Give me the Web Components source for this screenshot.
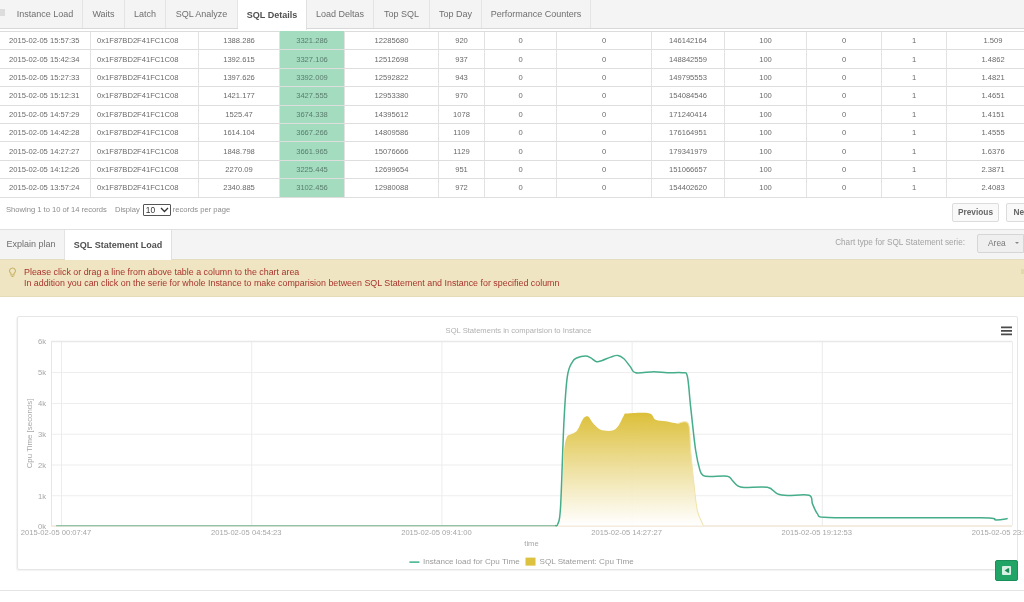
<!DOCTYPE html>
<html>
<head>
<meta charset="utf-8">
<title>SQL Details</title>
<style>
html, body { margin: 0; padding: 0; background: #fff; overflow: hidden; height: 602px; }
body { font-family: "Liberation Sans", Arial, sans-serif; color: #666; width: 1045px; filter: blur(.3px); }
</style>
</head>
<body>

<top-tabs>
  <tab-item style="--w:75px">Instance Load</tab-item>
  <tab-item style="--w:42px">Waits</tab-item>
  <tab-item style="--w:41px">Latch</tab-item>
  <tab-item style="--w:72px">SQL Analyze</tab-item>
  <tab-item style="--w:69px" active>SQL Details</tab-item>
  <tab-item style="--w:67px">Load Deltas</tab-item>
  <tab-item style="--w:56px">Top SQL</tab-item>
  <tab-item style="--w:52px">Top Day</tab-item>
  <tab-item style="--w:109px">Performance Counters</tab-item>
</top-tabs>

<stats-table></stats-table>
<table-footer></table-footer>

<sub-tabs>
  <tab-item style="--w:65px;--h:29px;padding-right:2px">Explain plan</tab-item>
  <tab-item style="--w:107px;--h:29px" active>SQL Statement Load</tab-item>
  <type-picker slot="right"></type-picker>
</sub-tabs>

<hint-box>
  <div>Please click or drag a line from above table a column to the chart area</div>
  <div>In addition you can click on the serie for whole Instance to make comparision between SQL Statement and Instance for specified column</div>
</hint-box>

<load-chart></load-chart>

<script>
class TabItem extends HTMLElement {
  constructor() {
    super();
    this.attachShadow({ mode: "open" }).innerHTML = `
    <style>
    :host {
      display: flex;
      align-items: center;
      justify-content: center;
      box-sizing: border-box;
      width: var(--w);
      height: var(--h, 28px);
      font-size: 9px;
      color: #6f6f6f;
      border-right: 1px solid #e4e4e4;
      white-space: nowrap;
    }
    :host([active]) {
      background: #fff;
      color: #505050;
      font-weight: 700;
      height: calc(var(--h, 28px) + 2px);
      margin-bottom: -1px;
      border-right: 1px solid #e0e0e0;
    }
    </style>
    <slot></slot>`;
  }
}

class TopTabs extends HTMLElement {
  constructor() {
    super();
    this.attachShadow({ mode: "open" }).innerHTML = `
    <style>
    :host {
      display: flex;
      height: 28px;
      background: #f4f4f4;
      border-bottom: 1px solid #d8d8d8;
      padding-left: 8px;
      position: relative;
    }
    .grip {
      position: absolute;
      left: 0;
      top: 9px;
      width: 5px;
      height: 7px;
      background: #dcdcdc;
    }
    </style>
    <div class="grip"></div>
    <slot></slot>`;
  }
}

class StatsTable extends HTMLElement {
  constructor() {
    super();
    this.shadow = this.attachShadow({ mode: "open" });
  }

  connectedCallback() {
    const sqlId = "0x1F87BD2F41FC1C08";
    const rows = [
      ["15:57:35", "1388.286", "3321.286", "12285680", "920", "146142164", "1.509"],
      ["15:42:34", "1392.615", "3327.106", "12512698", "937", "148842559", "1.4862"],
      ["15:27:33", "1397.626", "3392.009", "12592822", "943", "149795553", "1.4821"],
      ["15:12:31", "1421.177", "3427.555", "12953380", "970", "154084546", "1.4651"],
      ["14:57:29", "1525.47", "3674.338", "14395612", "1078", "171240414", "1.4151"],
      ["14:42:28", "1614.104", "3667.266", "14809586", "1109", "176164951", "1.4555"],
      ["14:27:27", "1848.798", "3661.965", "15076666", "1129", "179341979", "1.6376"],
      ["14:12:26", "2270.09", "3225.445", "12699654", "951", "151066657", "2.3871"],
      ["13:57:24", "2340.885", "3102.456", "12980088", "972", "154402620", "2.4083"]
    ];
    const cells = rows.map(r => [
      `<div class="c left first">2015-02-05 ${r[0]}</div>`,
      `<div class="c left">${sqlId}</div>`,
      `<div class="c">${r[1]}</div>`,
      `<div class="c hot">${r[2]}</div>`,
      `<div class="c">${r[3]}</div>`,
      `<div class="c">${r[4]}</div>`,
      `<div class="c">0</div>`,
      `<div class="c">0</div>`,
      `<div class="c">${r[5]}</div>`,
      `<div class="c">100</div>`,
      `<div class="c">0</div>`,
      `<div class="c">1</div>`,
      `<div class="c">${r[6]}</div>`
    ].join("")).join("");

    this.shadow.innerHTML = `
    <style>
    :host {
      display: block;
      margin-top: 2px;
      border-top: 1px solid #dcdcdc;
      width: 1040px;
    }
    .grid {
      display: grid;
      grid-template-columns: 91px 108px 81px 65px 94px 46px 72px 95px 73px 82px 75px 65px 93px;
      grid-auto-rows: 18.4px;
      font-size: 7.6px;
      color: #6a6a6a;
    }
    .c {
      display: flex;
      align-items: center;
      justify-content: center;
      box-sizing: border-box;
      border-right: 1px solid #e2e2e2;
      border-bottom: 1px solid #dedede;
      white-space: nowrap;
    }
    .left { justify-content: flex-start; padding-left: 6px; }
    .first { padding-left: 9px; }
    .hot { background: #a4dcc0; color: #5a7d6c; margin-top: -1px; }
    .grid > .hot:nth-child(n+14) { margin-top: 0; }
    </style>
    <div class="grid">${cells}</div>`;
  }
}

class TableFooter extends HTMLElement {
  constructor() {
    super();
    this.attachShadow({ mode: "open" }).innerHTML = `
    <style>
    :host {
      display: flex;
      align-items: flex-start;
      height: 32px;
      box-sizing: border-box;
      padding: 6px 6px 0 6px;
      font-size: 7.6px;
      color: #8c8c8c;
      border-bottom: 1px solid #e0e0e0;
    }
    .info { display: flex; align-items: center; height: 12px; }
    .sel {
      display: flex;
      align-items: center;
      justify-content: space-between;
      box-sizing: border-box;
      width: 28px;
      height: 12px;
      margin: 0 2px 0 3px;
      padding: 0 1px 0 2px;
      border: 1px solid #555;
      border-radius: 1px;
      color: #333;
      font-size: 8.4px;
    }
    .gap { width: 8px; }
    .btns { margin-left: auto; display: flex; gap: 7px; margin-top: -1px; }
    .btn {
      box-sizing: border-box;
      height: 19px;
      border: 1px solid #dcdcdc;
      border-radius: 2px;
      background: #f9f9f9;
      color: #666;
      font-weight: 700;
      font-size: 8.3px;
      display: flex;
      align-items: center;
      justify-content: center;
    }
    </style>
    <div class="info">
      <span>Showing 1 to 10 of 14 records</span>
      <span class="gap"></span>
      <span>Display</span>
      <span class="sel">10<svg width="9" height="6" viewBox="0 0 9 6"><path d="M1 1l3.5 3.5L8 1" fill="none" stroke="#333" stroke-width="1.3"/></svg></span>
      <span>records per page</span>
    </div>
    <div class="btns">
      <div class="btn" style="width:47px">Previous</div>
      <div class="btn" style="width:33px">Next</div>
    </div>`;
  }
}

class SubTabs extends HTMLElement {
  constructor() {
    super();
    this.attachShadow({ mode: "open" }).innerHTML = `
    <style>
    :host {
      display: flex;
      height: 30px;
      box-sizing: border-box;
      background: #f4f4f4;
      border-bottom: 1px solid #e3dcc0;
      width: 1024px;
    }
    .right { margin-left: auto; }
    </style>
    <slot></slot>
    <div class="right"><slot name="right"></slot></div>`;
  }
}

class TypePicker extends HTMLElement {
  constructor() {
    super();
    this.attachShadow({ mode: "open" }).innerHTML = `
    <style>
    :host {
      display: flex;
      align-items: flex-start;
      height: 29px;
      font-size: 8.2px;
      color: #a3a3a3;
    }
    .label { line-height: 26px; }
    .box {
      display: flex;
      align-items: center;
      box-sizing: border-box;
      width: 47px;
      height: 19px;
      margin: 4px 0 0 12px;
      padding-left: 10px;
      border: 1px solid #d6d6d6;
      border-radius: 2px 0 0 2px;
      background: #efefef;
      color: #777;
      font-size: 8.4px;
    }
    .caret {
      width: 0;
      height: 0;
      margin-left: 9px;
      border: 2px solid transparent;
      border-top: 2px solid #888;
      border-bottom: 0;
    }
    </style>
    <span class="label">Chart type for SQL Statement serie:</span>
    <div class="box">Area<span class="caret"></span></div>`;
  }
}

class HintBox extends HTMLElement {
  constructor() {
    super();
    this.attachShadow({ mode: "open" }).innerHTML = `
    <style>
    :host {
      display: flex;
      box-sizing: border-box;
      width: 1024px;
      height: 37px;
      padding: 7px 0 0 8px;
      background: #efe5c2;
      border-bottom: 1px solid #e4dcb8;
      color: #a8352c;
      font-size: 8.9px;
      line-height: 11px;
      position: relative;
    }
    svg { flex: none; margin: 0 7px 0 0; }
    .close {
      position: absolute;
      right: 0;
      top: 9px;
      width: 3px;
      height: 5px;
      background: #e3d7ac;
    }
    </style>
    <svg width="9" height="11" viewBox="0 0 9 11">
      <path d="M4.5 1A3 3 0 0 0 3 6.6V8h3V6.6A3 3 0 0 0 4.5 1z" fill="none" stroke="#c9b266" stroke-width="1.1"/>
      <path d="M3.4 9.5h2.2" stroke="#c9b266" stroke-width="1.1"/>
    </svg>
    <div><slot></slot></div>
    <div class="close"></div>`;
  }
}

class LoadChart extends HTMLElement {
  constructor() {
    super();
    this.shadow = this.attachShadow({ mode: "open" });
  }

  // catmull-rom through the points, close enough to highcharts spline
  smooth(pts) {
    let d = `M${pts[0][0]} ${pts[0][1]}`;
    for (let i = 0; i < pts.length - 1; i++) {
      const p0 = pts[i - 1] || pts[i];
      const p1 = pts[i];
      const p2 = pts[i + 1];
      const p3 = pts[i + 2] || p2;
      const c1x = p1[0] + (p2[0] - p0[0]) / 6;
      const c1y = p1[1] + (p2[1] - p0[1]) / 6;
      const c2x = p2[0] - (p3[0] - p1[0]) / 6;
      const c2y = p2[1] - (p3[1] - p1[1]) / 6;
      d += `C${c1x.toFixed(1)} ${c1y.toFixed(1)} ${c2x.toFixed(1)} ${c2y.toFixed(1)} ${p2[0].toFixed(1)} ${p2[1].toFixed(1)}`;
    }
    return d;
  }

  connectedCallback() {
    // traced from zoom at 3x, origin 540,340
    const z = (p) => p.map(([x, y]) => [540 + x / 3, 340 + y / 3]);
    const instance = z([
      [44, 555], [52, 550], [60, 500], [70, 250], [80, 110], [95, 65], [110, 52], [135, 47],
      [150, 52], [168, 64], [185, 60], [210, 50], [232, 45], [250, 55], [270, 80], [285, 97],
      [340, 94], [380, 97], [425, 97], [440, 108], [450, 200], [465, 330], [478, 390], [488, 405],
      [510, 408], [560, 407], [575, 420], [590, 435], [610, 441], [680, 440], [710, 460], [740, 465],
      [805, 464], [815, 490], [830, 520], [850, 530]
    ]).concat([[866, 517.3], [980, 517.3], [995, 519.3], [1006.7, 518]]);
    const stmt = z([
      [55, 555], [62, 500], [70, 340], [78, 292], [90, 282], [108, 272], [120, 250], [130, 232],
      [143, 228], [155, 245], [175, 265], [190, 270], [215, 270], [232, 258], [250, 225], [258, 219],
      [325, 218], [345, 238], [375, 242], [410, 249], [443, 250], [450, 330], [460, 430], [470, 510], [488, 555]
    ]);
    const stmtD = this.smooth(stmt);

    const ys = [341, 372, 403, 433.7, 464.5, 495.3];
    const yLabels = ["6k", "5k", "4k", "3k", "2k", "1k", "0k"];
    const xs = [61.5, 251.5, 441.5, 631.5, 821.5, 1011.5];
    const xLabels = ["00:07:47", "04:54:23", "09:41:00", "14:27:27", "19:12:53", "23:59:30"];

    const hGrid = ys.map(y => `<path d="M51 ${y}H1011" stroke="#eeeeee"/>`).join("");
    const vGrid = xs.map(x => `<path d="M${x} 341V525" stroke="#ececec"/>`).join("");
    const yText = yLabels.map((t, i) =>
      `<text x="46" y="${(ys[i] || 525.5) + 3}" text-anchor="end">${t}</text>`).join("");
    const xText = xLabels.map((t, i) =>
      `<text x="${xs[i] - 5.5}" y="534.5" text-anchor="middle">2015-02-05 ${t}</text>`).join("");

    this.shadow.innerHTML = `
    <style>
    :host {
      display: block;
      position: relative;
      width: 1024px;
      height: 294px;
      box-sizing: border-box;
      padding: 19px 6px 0 17px;
    }
    .card {
      height: 254px;
      box-sizing: border-box;
      border: 1px solid #e6e6e6;
      border-radius: 2px;
      box-shadow: -1px 1px 1px #f3f3f3;
    }
    svg { display: block; overflow: visible; font-family: "Liberation Sans", Arial, sans-serif; }
    text { font-size: 7.6px; fill: #a6a6a6; }
    .title { fill: #b0b0b0; }
    .axis { font-size: 7.9px; }
    .legend { font-size: 8.1px; fill: #9a9a9a; }
    .rule {
      position: absolute;
      left: 0;
      right: 0;
      top: 293px;
      height: 1px;
      background: #e4e4e4;
    }
    .back {
      position: absolute;
      left: 995px;
      top: 263px;
      width: 23px;
      height: 21px;
      box-sizing: border-box;
      border-radius: 2px;
      border: 1px solid #1a8f59;
      background: #20a567;
      display: flex;
      align-items: center;
      justify-content: center;
    }
    </style>
    <div class="card">
      <svg width="1001" height="254" viewBox="18 317 1000 253">
        <defs>
          <linearGradient id="fade" x1="0" y1="0" x2="0" y2="1">
            <stop offset="0" stop-color="#dcbf38"/>
            <stop offset="1" stop-color="#ffffff" stop-opacity=".9"/>
          </linearGradient>
        </defs>
        <text class="title" x="518" y="332.5" text-anchor="middle">SQL Statements in comparision to Instance</text>
        <path d="M1000 327h11M1000 330.5h11M1000 334h11" stroke="#4a4a4a" stroke-width="1.8"/>
        ${hGrid}${vGrid}
        <path d="M51.5 341V525" stroke="#e6e6e6"/>
        <path d="M51 341H1011" stroke="#e8e8e8" stroke-width="1.5"/>
        <path d="M51 525.5H1011" stroke="#ead9c0"/>
        <path d="M56 525.2H556" stroke="#74b596"/>
        <path d="${stmtD}Z" fill="url(#fade)"/>
        <path d="${this.smooth(stmt.slice(19))}" fill="none" stroke="#efe3a8"/>
        <path d="${this.smooth(instance)}" fill="none" stroke="#45ad8a" stroke-width="1.5"/>
        ${yText}${xText}
        <text class="axis" transform="translate(32 433) rotate(-90)" text-anchor="middle">Cpu Time [seconds]</text>
        <text x="531" y="545" text-anchor="middle">time</text>
        <path d="M409 561.5h10" stroke="#3cb18a" stroke-width="1.5"/>
        <text class="legend" x="422.5" y="563.5">Instance load for Cpu Time</text>
        <rect x="525" y="557" width="10" height="8" fill="#dcc23e"/>
        <text class="legend" x="539" y="563.5">SQL Statement: Cpu Time</text>
      </svg>
    </div>
    <div class="rule"></div>
    <div class="back">
      <svg width="11" height="11" viewBox="0 0 11 11">
        <rect x="1" y="1" width="9" height="9" rx="1" fill="#d6f0e4"/>
        <path d="M7 3.2v4.6L3.6 5.5z" fill="#178a55"/>
        <path d="M7 3.2h1.2v4.6H7" fill="#178a55"/>
      </svg>
    </div>`;
  }
}

customElements.define("tab-item", TabItem);
customElements.define("top-tabs", TopTabs);
customElements.define("stats-table", StatsTable);
customElements.define("table-footer", TableFooter);
customElements.define("sub-tabs", SubTabs);
customElements.define("type-picker", TypePicker);
customElements.define("hint-box", HintBox);
customElements.define("load-chart", LoadChart);
</script>
</body>
</html>
